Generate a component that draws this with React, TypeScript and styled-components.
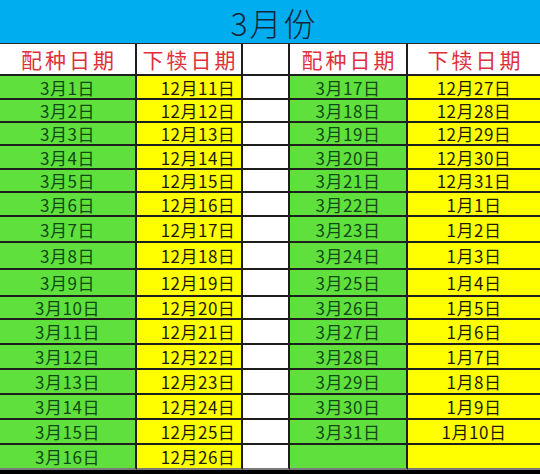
import React from "react";
import styled, { createGlobalStyle } from "styled-components";

const Global = createGlobalStyle`
  html, body { margin: 0; padding: 0; background: #000; }
  body { width: 540px; height: 474px; overflow: hidden; }
  * { box-sizing: border-box; }
`;

const ROW_HEIGHTS = [24, 23, 23, 24, 23, 24, 26, 27, 27, 23, 25, 25, 25, 25, 25, 25];

const Sheet = styled.div<{ $rows: string }>`
  display: grid;
  grid-template-columns: 137px 106px 47px 118px 132px;
  grid-template-rows: 44px 32px ${(p) => p.$rows};
  width: 540px;
  background: #fff;
  font-family: "Noto Sans CJK SC", "Noto Sans", sans-serif;
  line-height: 1;
`;

const Title = styled.div`
  grid-column: 1 / -1;
  background: #00aeef;
  color: #14283a;
  font-size: 32px;
  line-height: 42px;
  font-family: "Noto Sans CJK SC", sans-serif;
  font-weight: 300;
  display: flex;
  align-items: center;
  justify-content: center;
  padding-left: 8px;
  border-bottom: 1px solid #2a2a2a;
  letter-spacing: 2px;
`;

const Cell = styled.div<{ $bg: string; $last?: boolean; $end?: boolean; $shift?: number }>`
  background: ${(p) => p.$bg};
  border-right: ${(p) => (p.$end ? "none" : "2px solid #1e1e1e")};
  border-bottom: 2px solid ${(p) => (p.$last ? "#7a7a7a" : "#1e1e1e")};
  display: flex;
  align-items: center;
  justify-content: center;
  padding-left: ${(p) => p.$shift ?? 0}px;
  white-space: nowrap;
`;

const HeadText = styled.span`
  color: #e0303a;
  font-size: 21px;
  line-height: 1;
  letter-spacing: 3px;
  margin-right: -3px;
`;

const DateText = styled.span<{ $color: string }>`
  color: ${(p) => p.$color};
  font-size: 17px;
  line-height: 1;
  letter-spacing: 0.5px;
`;

const GREEN = "#5fe03c";
const YELLOW = "#ffff00";
const WHITE = "#ffffff";

type Row = { a: string; b: string; c: string; d: string };

const rows: Row[] = [];
for (let i = 0; i < 16; i++) {
  const day1 = i + 1;
  const day2 = i + 17;
  const b = `12月${11 + i}日`;
  const a = `3月${day1}日`;
  let c = "";
  let d = "";
  if (day2 <= 31) {
    c = `3月${day2}日`;
    const n = 27 + i;
    d = n <= 31 ? `12月${n}日` : `1月${n - 31}日`;
  }
  rows.push({ a, b, c, d });
}

export default function App() {
  return (
    <>
      <Global />
      <Sheet $rows={ROW_HEIGHTS.map((h) => `${h}px`).join(" ")}>
        <Title>3月份</Title>
        <Cell $bg={WHITE}><HeadText>配种日期</HeadText></Cell>
        <Cell $bg={WHITE}><HeadText>下犊日期</HeadText></Cell>
        <Cell $bg={WHITE} />
        <Cell $bg={WHITE}><HeadText>配种日期</HeadText></Cell>
        <Cell $bg={WHITE} $end><HeadText>下犊日期</HeadText></Cell>
        {rows.map((r, i) => {
          const last = i === rows.length - 1;
          return (
            <React.Fragment key={i}>
              <Cell $bg={GREEN} $last={last}>
                <DateText $color="#0f4a14">{r.a}</DateText>
              </Cell>
              <Cell $bg={YELLOW} $last={last} $shift={18}>
                <DateText $color="#1c1c08">{r.b}</DateText>
              </Cell>
              <Cell $bg={WHITE} $last={last} />
              <Cell $bg={GREEN} $last={last}>
                <DateText $color="#0f4a14">{r.c}</DateText>
              </Cell>
              <Cell $bg={YELLOW} $last={last} $end>
                <DateText $color="#1c1c08">{r.d}</DateText>
              </Cell>
            </React.Fragment>
          );
        })}
      </Sheet>
    </>
  );
}
